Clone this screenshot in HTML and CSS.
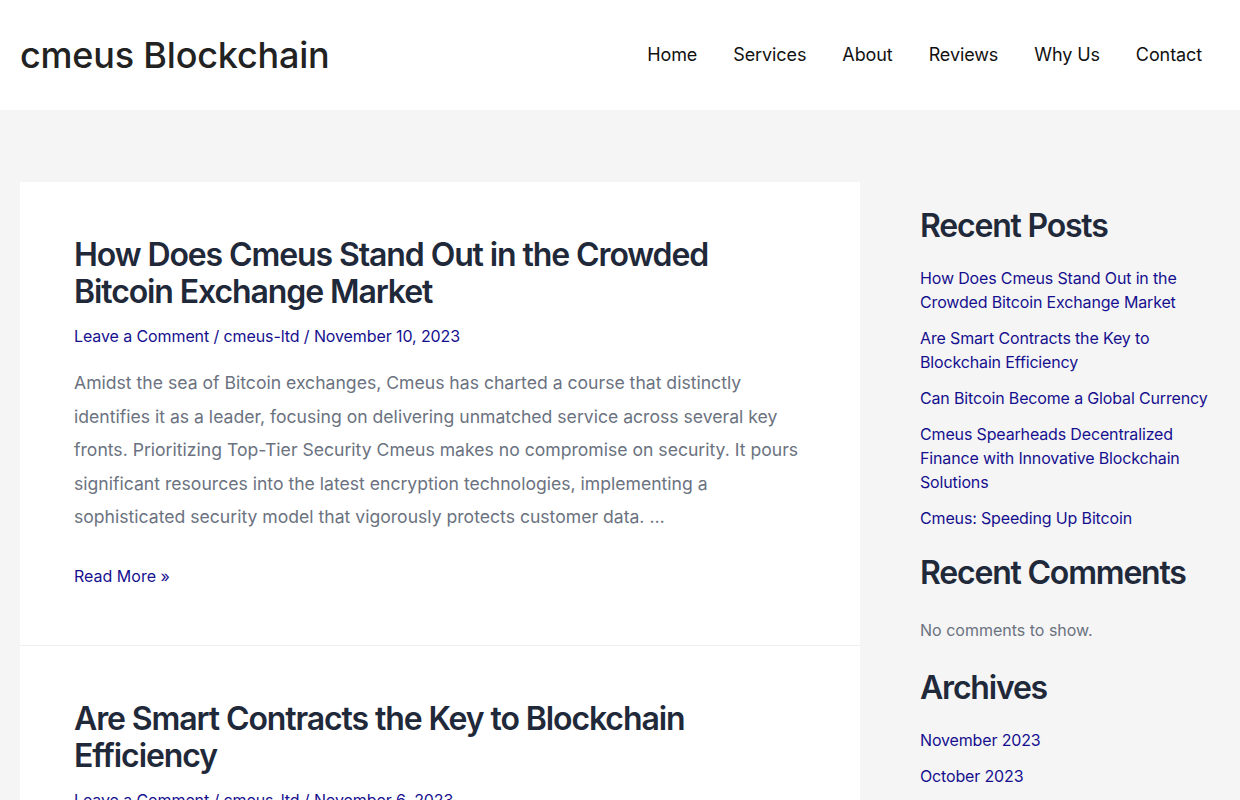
FILE: index.html
```html
<!DOCTYPE html>
<html lang="en">
<head>
<meta charset="utf-8">
<title>cmeus Blockchain</title>
<link rel="stylesheet" href="styles.css">
</head>
<body>
<header class="site-header">
  <div class="header-inner">
    <a class="logo" href="#">cmeus Blockchain</a>
    <nav class="main-nav">
      <a href="#">Home</a>
      <a href="#">Services</a>
      <a href="#">About</a>
      <a href="#">Reviews</a>
      <a href="#">Why Us</a>
      <a href="#">Contact</a>
    </nav>
  </div>
</header>
<div class="site-content">
  <main class="posts">
    <article class="post-card">
      <h2 class="post-title">How Does Cmeus Stand Out in the Crowded Bitcoin Exchange Market</h2>
      <div class="post-meta"><a href="#">Leave a Comment</a> / <a href="#">cmeus-ltd</a> / <a href="#">November 10, 2023</a></div>
      <p class="post-excerpt">Amidst the sea of Bitcoin exchanges, Cmeus has charted a course that distinctly identifies it as a leader, focusing on delivering unmatched service across several key fronts. Prioritizing Top-Tier Security Cmeus makes no compromise on security. It pours significant resources into the latest encryption technologies, implementing a sophisticated security model that vigorously protects customer data. …</p>
      <a class="read-more" href="#">Read More »</a>
    </article>
    <article class="post-card">
      <h2 class="post-title">Are Smart Contracts the Key to Blockchain Efficiency</h2>
      <div class="post-meta"><a href="#">Leave a Comment</a> / <a href="#">cmeus-ltd</a> / <a href="#">November 6, 2023</a></div>
      <p class="post-excerpt">Smart contracts are changing how agreements are executed on the blockchain, removing intermediaries and reducing costs for everyone involved. …</p>
      <a class="read-more" href="#">Read More »</a>
    </article>
  </main>
  <aside class="sidebar">
    <section class="widget">
      <h2 class="widget-title">Recent Posts</h2>
      <ul class="widget-list">
        <li><a href="#">How Does Cmeus Stand Out in the Crowded Bitcoin Exchange Market</a></li>
        <li><a href="#">Are Smart Contracts the Key to Blockchain Efficiency</a></li>
        <li><a href="#">Can Bitcoin Become a Global Currency</a></li>
        <li><a href="#">Cmeus Spearheads Decentralized Finance with Innovative Blockchain Solutions</a></li>
        <li><a href="#">Cmeus: Speeding Up Bitcoin</a></li>
      </ul>
    </section>
    <section class="widget">
      <h2 class="widget-title">Recent Comments</h2>
      <p class="widget-text">No comments to show.</p>
    </section>
    <section class="widget">
      <h2 class="widget-title">Archives</h2>
      <ul class="widget-list">
        <li><a href="#">November 2023</a></li>
        <li><a href="#">October 2023</a></li>
      </ul>
    </section>
  </aside>
</div>
</body>
</html>
```
FILE: styles.css
```css
* { box-sizing: border-box; }
html, body { margin: 0; padding: 0; }
body {
  background: #f5f5f5;
  font-family: Inter, "Noto Sans", sans-serif;
  color: #6b7280;
  font-size: 16px;
}
a { text-decoration: none; color: #16108f; }

.site-header { background: #fff; height: 110px; }
.header-inner {
  height: 110px;
  padding: 0 20px;
  display: flex;
  align-items: center;
  justify-content: space-between;
}
.logo {
  font-size: 36px;
  font-weight: 500;
  color: #222;
  letter-spacing: -0.2px;
}
.main-nav { display: flex; padding-right: 0; }
.main-nav a {
  color: #111;
  font-size: 18px;
  padding: 0 18px;
  letter-spacing: -0.1px;
  line-height: 110px;
}

.site-content {
  display: flex;
  gap: 60px;
  padding: 72px 20px 0;
  align-items: flex-start;
}
.posts { width: 840px; flex: none; }
.post-card {
  background: #fff;
  padding: 54px 54px 57px;
  border-bottom: 1px solid #eeeeee;
}
.post-title {
  margin: 0 0 14px;
  font-size: 32px;
  line-height: 37px;
  font-weight: 600;
  color: #1f293a;
  letter-spacing: -1.1px;
}
.post-meta { font-size: 16px; line-height: 24px; color: #16108f; margin-bottom: 18px; letter-spacing: -0.1px; }
.post-excerpt {
  margin: 0 0 30px;
  font-size: 17.6px;
  line-height: 33.5px;
  color: #6b7280;
}
.read-more { font-size: 16px; line-height: 24px; display: inline-block; }

.sidebar { width: 300px; flex: none; padding-top: 26px; }
.widget { margin-bottom: 37px; }
.widget-title {
  margin: 0 0 22px;
  font-size: 32px;
  line-height: 36px;
  font-weight: 600;
  color: #1f293a;
  letter-spacing: -1.2px;
}
.widget-list { list-style: none; margin: 0 0 -12px; padding: 0; }
.widget-list li { font-size: 16px; line-height: 24px; margin-bottom: 12px; letter-spacing: -0.15px; }
.widget-text { margin: 27px 0 -9px; font-size: 16px; line-height: 24px; color: #6b7280; }
```
